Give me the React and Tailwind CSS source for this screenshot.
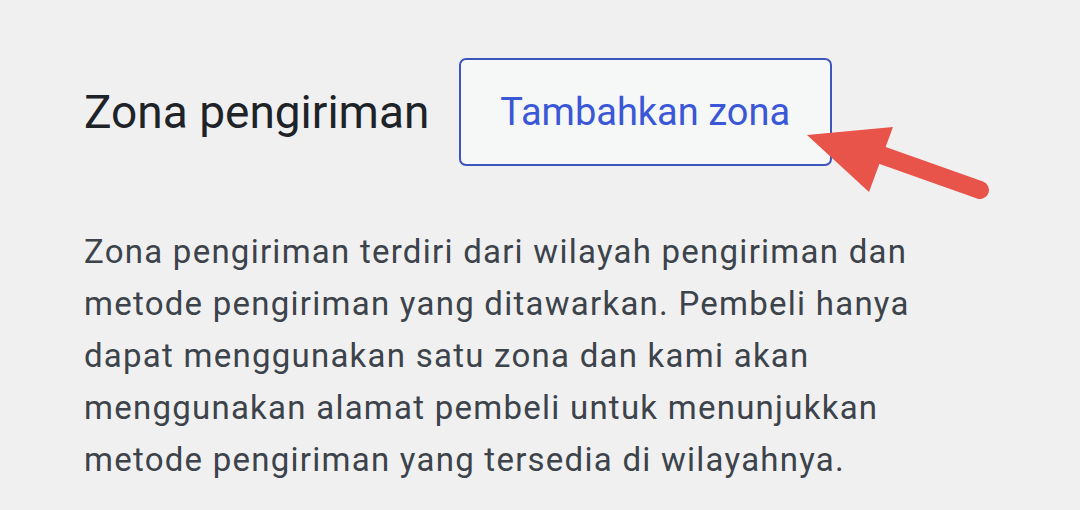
export default function App() {
  return (
    <div className="relative w-[1080px] h-[510px] overflow-hidden bg-[#f0f0f1] font-['Roboto',sans-serif]">
      <div className="pl-[84px] pt-[58px]">
        <div className="flex items-center gap-[30px]">
          <h2 className="text-[46px] leading-none text-[#1d2327] font-normal">Zona pengiriman</h2>
          <button className="w-[373px] h-[108px] rounded-[7px] border-2 border-[#3d56bd] bg-[#f6f7f7] text-[#3a57d6] text-[38px] flex items-center pl-[39px]">
            Tambahkan zona
          </button>
        </div>
        <p className="mt-[60px] text-[33px] tracking-[1.25px] leading-[52px] text-[#3c434a]">
          Zona pengiriman terdiri dari wilayah pengiriman dan<br />
          metode pengiriman yang ditawarkan. Pembeli hanya<br />
          dapat menggunakan satu zona dan kami akan<br />
          menggunakan alamat pembeli untuk menunjukkan<br />
          metode pengiriman yang tersedia di wilayahnya.
        </p>
      </div>
      <svg className="absolute left-0 top-0" width="1080" height="510" viewBox="0 0 1080 510">
        <line x1="980" y1="190" x2="870" y2="151" stroke="#e8534a" strokeWidth="18" strokeLinecap="round" />
        <polygon points="807,135 893,127 869,192" fill="#e8534a" />
      </svg>
    </div>
  );
}
